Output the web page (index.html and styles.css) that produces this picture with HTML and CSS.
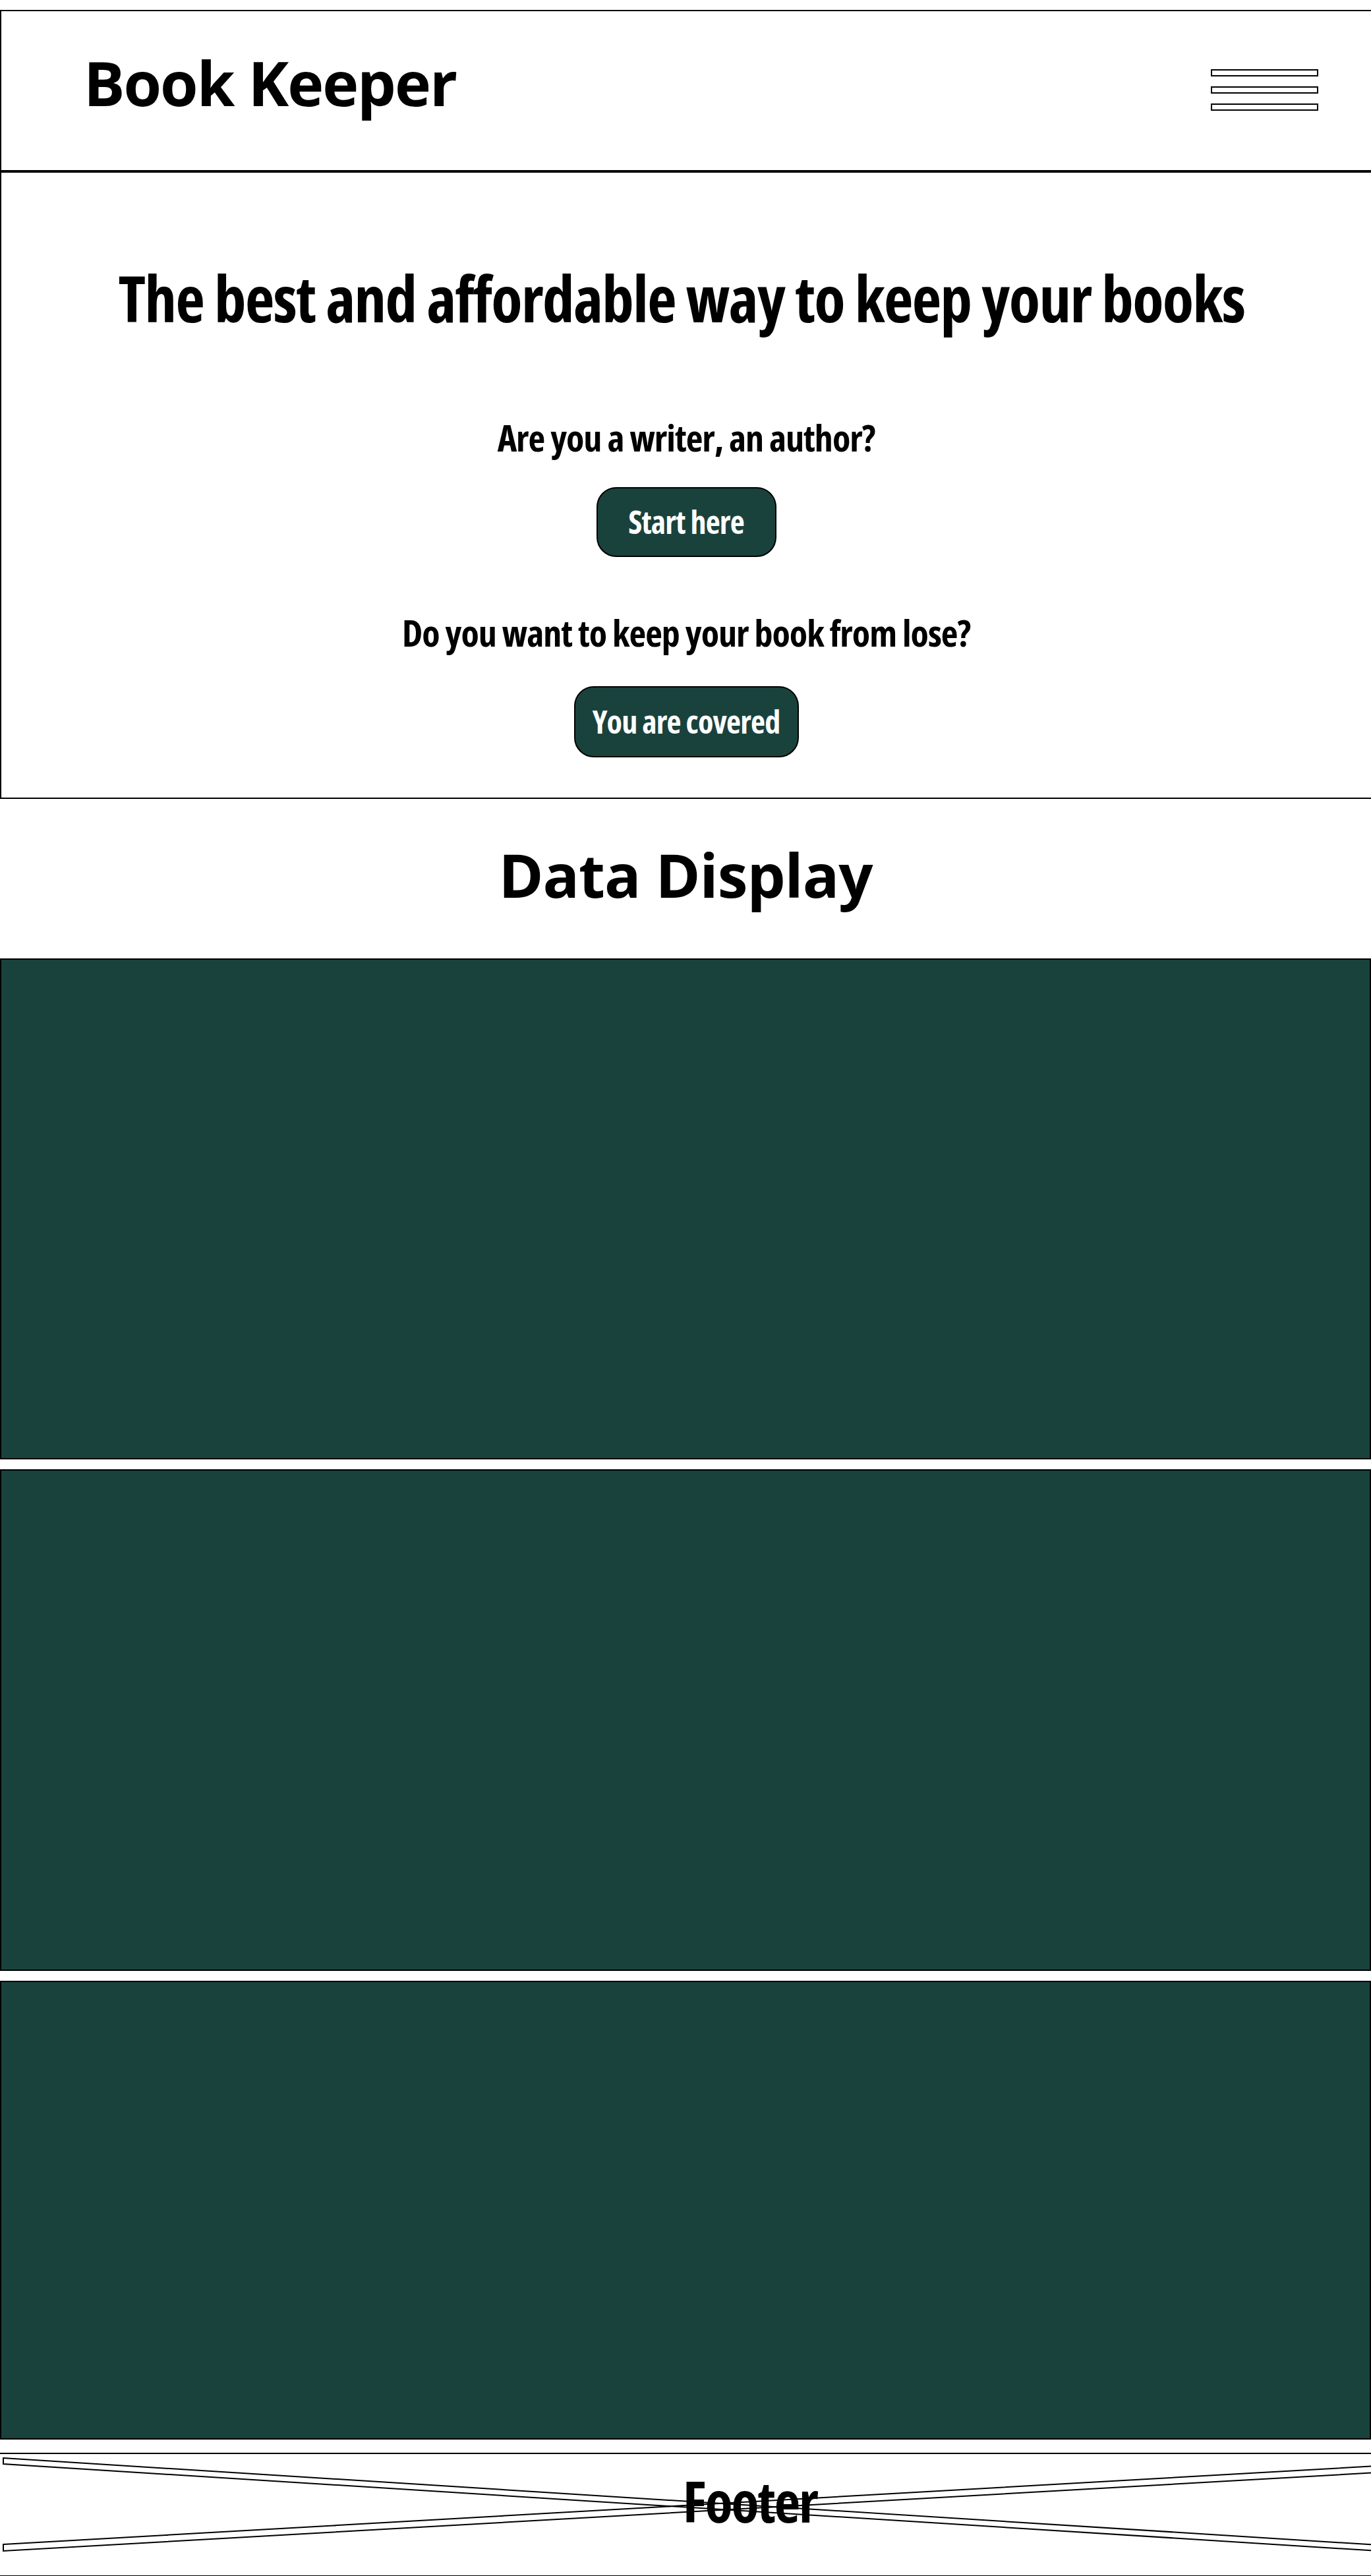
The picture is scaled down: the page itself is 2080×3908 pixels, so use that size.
FILE: index.html
```html
<!DOCTYPE html>
<html lang="en">
<head>
<meta charset="utf-8">
<title>Book Keeper</title>
<link rel="stylesheet" href="styles.css">
</head>
<body>
<header class="site-header">
  <div class="brand">Book Keeper</div>
  <div class="hamburger" aria-label="Menu">
    <span class="bar"></span>
    <span class="bar"></span>
    <span class="bar"></span>
  </div>
</header>

<section class="hero">
  <h1 class="hero-title">The best and affordable way to keep your books</h1>
  <p class="hero-question q1">Are you a writer, an author?</p>
  <a class="btn btn-start" href="#">Start here</a>
  <p class="hero-question q2">Do you want to keep your book from lose?</p>
  <a class="btn btn-covered" href="#">You are covered</a>
</section>

<section class="data">
  <h2 class="data-title">Data Display</h2>
  <div class="cards">
    <div class="card card-1"></div>
    <div class="card card-2"></div>
    <div class="card card-3"></div>
  </div>
</section>

<footer class="site-footer">
  <svg class="footer-x" viewBox="0 0 2080 184" preserveAspectRatio="none" aria-hidden="true">
    <polygon points="5,6 2090,138 2090,147 5,15" />
    <polygon points="5,137 2090,18 2090,28 5,147" />
  </svg>
  <div class="footer-label">Footer</div>
</footer>
</body>
</html>
```
FILE: styles.css
```css
* { box-sizing: border-box; }

html, body {
  margin: 0;
  padding: 0;
  background: #ffffff;
  color: #000000;
  font-family: "Open Sans", "Noto Sans", sans-serif;
}

body { overflow-x: hidden; }

/* Header */
.site-header {
  margin-top: 15px;
  height: 245px;
  border-top: 2px solid #000;
  border-left: 2px solid #000;
  border-bottom: 2px solid #000;
  display: flex;
  align-items: center;
  justify-content: space-between;
  padding: 0 80px 0 125px;
}

.brand {
  font-size: 93px;
  font-weight: 700;
  line-height: 1;
  letter-spacing: -2px;
  margin-bottom: 24px;
}

.hamburger {
  width: 163px;
  display: flex;
  flex-direction: column;
  gap: 15px;
  margin-bottom: 3px;
}

.bar {
  display: block;
  height: 11px;
  border: 2px solid #000;
  background: #fff;
}

/* Hero */
.hero {
  border-top: 2px solid #000;
  border-left: 2px solid #000;
  border-bottom: 2px solid #000;
  display: flex;
  flex-direction: column;
  align-items: center;
  padding: 141px 0 61px;
  font-stretch: 75%;
}

.hero-title {
  margin: 0;
  padding-right: 14px;
  font-size: 97px;
  font-weight: 700;
  line-height: 1;
  letter-spacing: -1.6px;
  font-stretch: 75%;
  white-space: nowrap;
}

.hero-question {
  margin: 0;
  font-size: 56px;
  font-weight: 700;
  line-height: 1;
  letter-spacing: -1px;
  font-stretch: 75%;
}

.q1 { margin-top: 135px; }
.q2 { margin-top: 86px; }

.btn {
  display: flex;
  align-items: center;
  justify-content: center;
  background: #1a423d;
  color: #ffffff;
  border: 2px solid #000;
  border-radius: 30px;
  text-decoration: none;
  font-size: 48px;
  font-weight: 700;
  line-height: 1;
  letter-spacing: -0.8px;
  font-stretch: 75%;
  white-space: nowrap;
}

.btn-start {
  margin-top: 48px;
  width: 273px;
  height: 106px;
}

.btn-covered {
  margin-top: 54px;
  width: 341px;
  height: 108px;
}

/* Data display */
.data-title {
  margin: 0;
  padding: 69px 0 81px;
  text-align: center;
  font-size: 92px;
  font-weight: 700;
  line-height: 1;
  letter-spacing: -1px;
}

.cards {
  display: flex;
  flex-direction: column;
  gap: 15px;
}

.card {
  background: #1a423d;
  border: 2px solid #000;
}

.card-1 { height: 760px; }
.card-2 { height: 761px; }
.card-3 { height: 696px; }

/* Footer */
.site-footer {
  position: relative;
  margin-top: 20px;
  height: 188px;
  border-top: 2px solid #000;
  border-bottom: 2px solid #000;
  padding: 28px 0 0 196px;
  text-align: center;
}

.footer-x {
  position: absolute;
  left: 0;
  top: 0;
  width: 100%;
  height: 100%;
  overflow: visible;
}

.footer-x polygon {
  fill: none;
  stroke: #000;
  stroke-width: 2;
}

.footer-label {
  position: relative;
  font-size: 86px;
  font-weight: 700;
  line-height: 1;
  letter-spacing: -2px;
  font-stretch: 75%;
}
```
